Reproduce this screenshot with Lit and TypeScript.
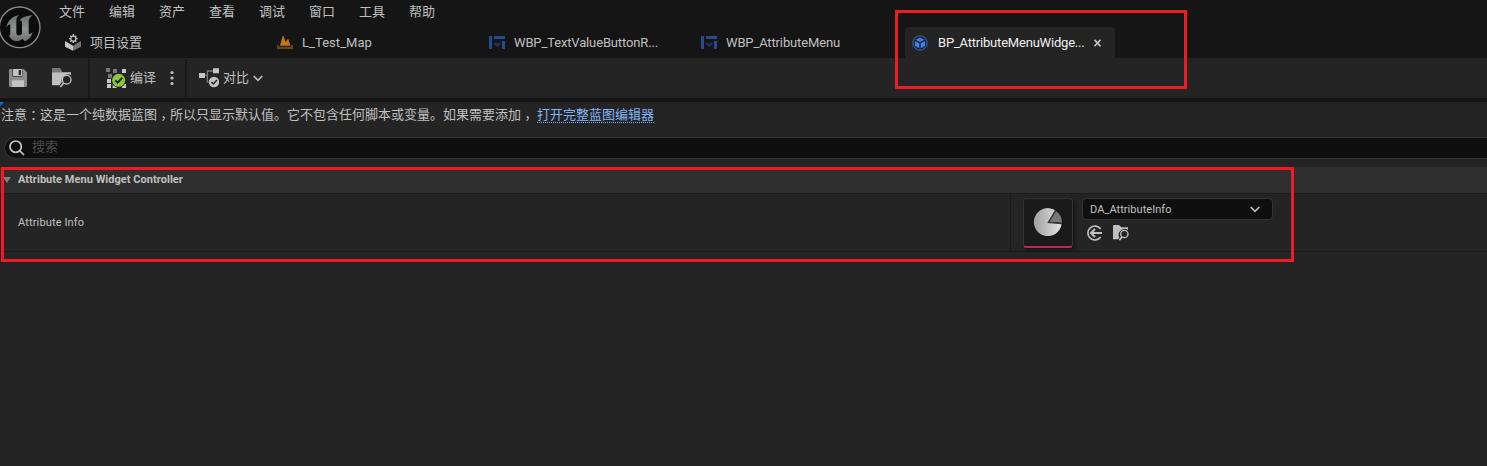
import { LitElement, html, css, svg } from "lit";
import { customElement } from "lit/decorators.js";

const logo = svg`<svg class="logo" width="42" height="44" viewBox="0 0 126 132">
  <defs><linearGradient id="lg" x1="0" y1="0" x2="0" y2="1"><stop offset="0" stop-color="#6f6f6f"/><stop offset=".55" stop-color="#8f9394"/><stop offset="1" stop-color="#6c7071"/></linearGradient></defs>
  <circle cx="59" cy="67" r="61" fill="#0c0c0c" stroke="#8b8b8b" stroke-width="4"/>
  <path fill="url(#lg)" d="M19 68C23 48 36 34 57 30C51 36 49 41 49 48V84C49 91 56 93 62 90L66 86V51C66 47 62 45 58 47C65 37 75 34 98 30C90 37 86 43 86 50V84C87 90 93 88 98 81C95 96 82 106 75 109L67 101C60 108 52 109 45 108C37 106 30 100 26 91C30 92 31 90 31 86V62C31 55 24 59 19 68Z"/></svg>`;

const settingsIcon = svg`<svg width="16" height="17" viewBox="0 0 48 51">
  <path fill="#c4c4c4" d="M0 21L24 35V50L0 38Z"/><path fill="#757575" d="M48 21L24 35V50L48 38Z"/>
  <circle cx="25" cy="14" r="7.5" fill="none" stroke="#c4c4c4" stroke-width="3.5"/>
  <path stroke="#c4c4c4" stroke-width="4" d="M25 0V6M25 22V27M12 14H17M33 14H38M16 5L20 9M34 5L30 9M16 23L20 19M34 23L30 19"/></svg>`;
const mapIcon = svg`<svg width="16" height="13" viewBox="0 0 48 39">
  <path fill="#c27a0c" d="M9 29L17 0L20 1L26 19L31 10L34 10L40 29Z"/><path fill="#6b460f" d="M0 26L7 29V32H41V29L48 26V39H0Z"/></svg>`;
const widgetIcon = svg`<svg width="16" height="13" viewBox="0 0 48 39">
  <path fill="#264a8c" d="M0 0H9V39H0ZM15 0H48V9H15ZM39 15H48V39H39Z"/>
  <path fill="#1d315b" d="M25 34L15 25V21L19 19L25 23L31 19L35 21V25Z"/></svg>`;
const blueprintIcon = svg`<svg width="16" height="16" viewBox="0 0 48 48">
  <circle cx="24" cy="24" r="21.5" fill="none" stroke="#3569c9" stroke-width="3"/>
  <path fill="#3d7df5" d="M24 8L38 14L24 21L10 14ZM9 18L22 25V40L9 33ZM39 18L26 25V40L39 33Z"/></svg>`;
const saveIcon = svg`<svg width="18" height="18" viewBox="0 0 54 54">
  <path fill="#8c8c8c" d="M0 3Q0 0 3 0H44L54 10V51Q54 54 51 54H3Q0 54 0 51Z"/>
  <path fill="#242424" d="M10 0H40V23H10Z"/><path fill="#c4c4c4" d="M12 0H39V21H12Z"/><path fill="#242424" d="M29 3H36V18H29Z"/>
  <path fill="#c4c4c4" d="M9 34H45V54H9Z"/></svg>`;
const browseIcon = svg`<svg width="20" height="20" viewBox="0 0 60 60">
  <path fill="#777" d="M0 0H24L30 9V13H0Z"/><path fill="#c0c0c0" d="M0 13H57V21A20 20 0 0 0 29 43L22 52H0Z"/>
  <circle cx="44" cy="35" r="13" fill="#242424" stroke="#c0c0c0" stroke-width="4"/><path stroke="#c0c0c0" stroke-width="5" d="M35 45L25 57"/></svg>`;
const compileIcon = svg`<svg width="20" height="20" viewBox="0 0 60 60">
  <path fill="#777" d="M0 0H12V12H0ZM21 3H33V15H21ZM6 18H18V30H6ZM39 18H51V30H39Z"/>
  <path fill="#c9c9c9" d="M48 3H60V15H48ZM3 33H15V45H3ZM3 48H15V60H3ZM20 48H32V60H20ZM48 48H60V60H48Z"/>
  <circle cx="38" cy="37" r="22" fill="#202020"/><circle cx="38" cy="37" r="19.5" fill="#8cc63f"/>
  <path fill="none" stroke="#1c2410" stroke-width="6" d="M28 37L35 44L49 29"/></svg>`;
const diffIcon = svg`<svg width="20" height="20" viewBox="0 0 60 60">
  <path fill="none" stroke="#777" stroke-width="4" d="M17 22H25V9H43M25 22V42H29"/>
  <path fill="#c4c4c4" d="M0 15H18V30H0ZM42 1H60V16H42Z"/><circle cx="45" cy="42" r="15.5" fill="#c4c4c4"/>
  <path fill="none" stroke="#242424" stroke-width="4.5" d="M37 42L43 48L54 36"/></svg>`;
const chevron = svg`<svg width="10" height="7" viewBox="0 0 10 7"><path d="M.7 1L5 5.3L9.3 1" fill="none" stroke="#c0c0c0" stroke-width="1.6"/></svg>`;
const searchIcon = svg`<svg width="16" height="16" viewBox="0 0 48 48"><circle cx="20" cy="20" r="17" fill="none" stroke="#c8c8c8" stroke-width="5"/><path d="M32 32L45 45" stroke="#c8c8c8" stroke-width="5"/></svg>`;
const assetIcon = svg`<svg width="30" height="30" viewBox="0 0 90 90">
  <defs><linearGradient id="pg"><stop offset="0" stop-color="#a0a0a0"/><stop offset="1" stop-color="#e4e4e4"/></linearGradient></defs>
  <path fill="url(#pg)" d="M46 43L66 6A42 42 0 1 0 86 49Z"/><path fill="#777" d="M49 41L69 9A42 42 0 0 1 87 44Z"/>
  <path fill="none" stroke="#3c3c3c" stroke-width="4" d="M68 7L46 43L86 47"/></svg>`;
const useIcon = svg`<svg width="16" height="16" viewBox="0 0 48 48"><path d="M41 12A21 21 0 1 0 41 36" fill="none" stroke="#c0c0c0" stroke-width="5"/>
  <path d="M12 24H45M24 12L12 24L24 36" fill="none" stroke="#c0c0c0" stroke-width="6"/></svg>`;
const smallBrowse = svg`<svg width="16" height="16" viewBox="0 0 48 48"><path fill="#c0c0c0" d="M0 3Q0 0 3 0H18L25 7H45V15A18 18 0 0 0 19 38L16 43H0Z"/>
  <circle cx="34" cy="27" r="11" fill="#242424" stroke="#c0c0c0" stroke-width="4"/><path stroke="#c0c0c0" stroke-width="5" d="M27 36L19 46"/></svg>`;

const menus = ["文件", "编辑", "资产", "查看", "调试", "窗口", "工具", "帮助"];
const tabs = [
  { icon: settingsIcon, label: "项目设置", cls: "cjk" },
  { icon: mapIcon, label: "L_Test_Map", cls: "map" },
  { icon: widgetIcon, label: "WBP_TextValueButtonR...", cls: "tight" },
  { icon: widgetIcon, label: "WBP_AttributeMenu", cls: "tight" },
  { icon: blueprintIcon, label: "BP_AttributeMenuWidge...", cls: "active" },
];

@customElement("app-root")
export class AppRoot extends LitElement {
  static styles = css`
    :host { display: block; position: relative; width: 1487px; height: 466px; overflow: hidden; background: #242424; color: #c0c0c0; font: 13px/18px Roboto, "Noto Sans CJK SC", sans-serif; }
    * { box-sizing: border-box; }
    svg { display: block; flex: none; }
    .header { height: 58px; background: #151515; display: flex; }
    .brand { width: 57px; padding-top: 5px; flex: none; }
    .main { flex: 1; display: flex; flex-direction: column; }
    .menu { height: 27px; display: flex; padding: 3px 0 0 2px; }
    .menu span { width: 50px; }
    .tabs { display: flex; gap: 2px; height: 31px; }
    .tab { width: 210px; display: flex; align-items: center; padding-left: 8px; border-radius: 4px 4px 0 0; white-space: nowrap; }
    .tab svg { margin-right: 9px; }
    .tab.active { background: #242424; color: #f0f0f0; }
    .tab.active .icon { margin-right: 1px; margin-left: -1px; }
    .tight .label { letter-spacing: -0.14px; }
    .map .label { letter-spacing: 0.05px; }
    .active .label { letter-spacing: -0.2px; }
    .close { margin-left: 9px; }
    .toolbar { height: 44px; border-bottom: 4px solid #151515; display: flex; align-items: center; }
    .group { height: 38px; display: flex; align-items: center; border-right: 2px solid #191919; }
    .files { width: 90px; padding-left: 9px; gap: 25px; }
    .build { width: 97px; padding-left: 16px; gap: 4px; }
    .diff { padding-left: 12px; gap: 4px; border: 0; }
    .dots { margin-left: 10px; }
    .notice { height: 35px; display: flex; padding: 4px 0 0 1px; white-space: pre; }
    .mid { font-family: "Noto Sans CJK TC", sans-serif; line-height: 1; vertical-align: -1px; }
    .comma { vertical-align: -4px; }
    .link { color: #82b4f5; margin-left: 3px; height: 17px; border-bottom: 1px dotted #82b4f5; }
    .search { height: 22px; margin-left: 4px; background: #0f0f0f; border: 1px solid #353535; border-right: 0; border-radius: 11px 0 0 11px; display: flex; align-items: center; padding-left: 4px; gap: 7px; color: #4d4d4d; }
    .search span { padding-bottom: 2px; }
    .category { margin-top: 8px; height: 27px; background: #2f2f2f; border-bottom: 1px solid #1a1a1a; display: flex; align-items: center; font-size: 11px; font-weight: 700; letter-spacing: 0.04px; padding: 0 0 1px 3px; gap: 7px; }
    .row { height: 58px; border-bottom: 1px solid #1a1a1a; display: flex; font-size: 11px; }
    .name { width: 1011px; padding-left: 18px; display: flex; align-items: center; border-right: 1px solid #1a1a1a; letter-spacing: 0.14px; }
    .value { display: flex; padding: 4px 0 0 12px; gap: 9px; }
    .thumb { width: 50px; height: 50px; border: 1px solid #343434; border-bottom: 2px solid #d01c5c; border-radius: 3px; background: #1a1a1a; display: flex; align-items: center; justify-content: center; box-shadow: 2px 2px 3px #151515; }
    .combo { width: 191px; height: 22px; border: 1px solid #343434; border-radius: 4px; background: #0f0f0f; display: flex; align-items: center; justify-content: space-between; padding: 0 12px 0 7px; letter-spacing: 0.05px; }
    .combo span { padding-top: 1px; }
    .actions { display: flex; gap: 10px; padding: 5px 0 0 5px; }
    .mark { position: absolute; border: 3px solid #ed1c24; }
    .mark-tab { left: 895px; top: 10px; width: 292px; height: 79px; }
    .mark-row { left: 1px; top: 167px; width: 1293px; height: 95px; }
    .corner { position: absolute; left: 0; top: 102px; }
  `;

  render() {
    const comma = html`<span class="mid comma" lang="zh-TW">，</span>`;
    return html`
      <div class="header">
        <div class="brand">${logo}</div>
        <div class="main">
          <div class="menu">${menus.map((m) => html`<span>${m}</span>`)}</div>
          <div class="tabs">
            ${tabs.map((t) => html`<div class="tab ${t.cls}"><span class="icon">${t.icon}</span><span class="label">${t.label}</span>
              ${t.cls === "active" ? html`<svg class="close" width="7" height="8" viewBox="0 0 7 8"><path d="M.5 .8L6.5 7.2M6.5 .8L.5 7.2" stroke="#c0c0c0" stroke-width="1.8"/></svg>` : ""}</div>`)}
          </div>
        </div>
      </div>
      <div class="toolbar">
        <div class="group files">${saveIcon}${browseIcon}</div>
        <div class="group build">${compileIcon}<span>编译</span>
          <svg class="dots" width="4" height="16" viewBox="0 0 4 16" fill="#c0c0c0"><circle cx="2" cy="2.5" r="1.6"/><circle cx="2" cy="8" r="1.6"/><circle cx="2" cy="13.5" r="1.6"/></svg></div>
        <div class="group diff">${diffIcon}<span>对比</span>${chevron}</div>
      </div>
      <div class="notice"><span>注意<span class="mid" lang="zh-TW">：</span>这是一个纯数据蓝图${comma}所以只显示默认值。它不包含任何脚本或变量。如果需要添加${comma}</span><span class="link">打开完整蓝图编辑器</span></div>
      <div class="search">${searchIcon}<span>搜索</span></div>
      <div class="category"><svg width="8" height="6" viewBox="0 0 8 6"><path d="M0 0H8L4 6Z" fill="#808080"/></svg><span>Attribute Menu Widget Controller</span></div>
      <div class="row">
        <div class="name">Attribute Info</div>
        <div class="value">
          <div class="thumb">${assetIcon}</div>
          <div>
            <div class="combo"><span>DA_AttributeInfo</span>${chevron}</div>
            <div class="actions">${useIcon}${smallBrowse}</div>
          </div>
        </div>
      </div>
      <svg class="corner" width="4" height="4" viewBox="0 0 4 4"><path d="M0 0H4L0 4Z" fill="#0a70e0"/></svg>
      <div class="mark mark-tab"></div>
      <div class="mark mark-row"></div>
    `;
  }
}
